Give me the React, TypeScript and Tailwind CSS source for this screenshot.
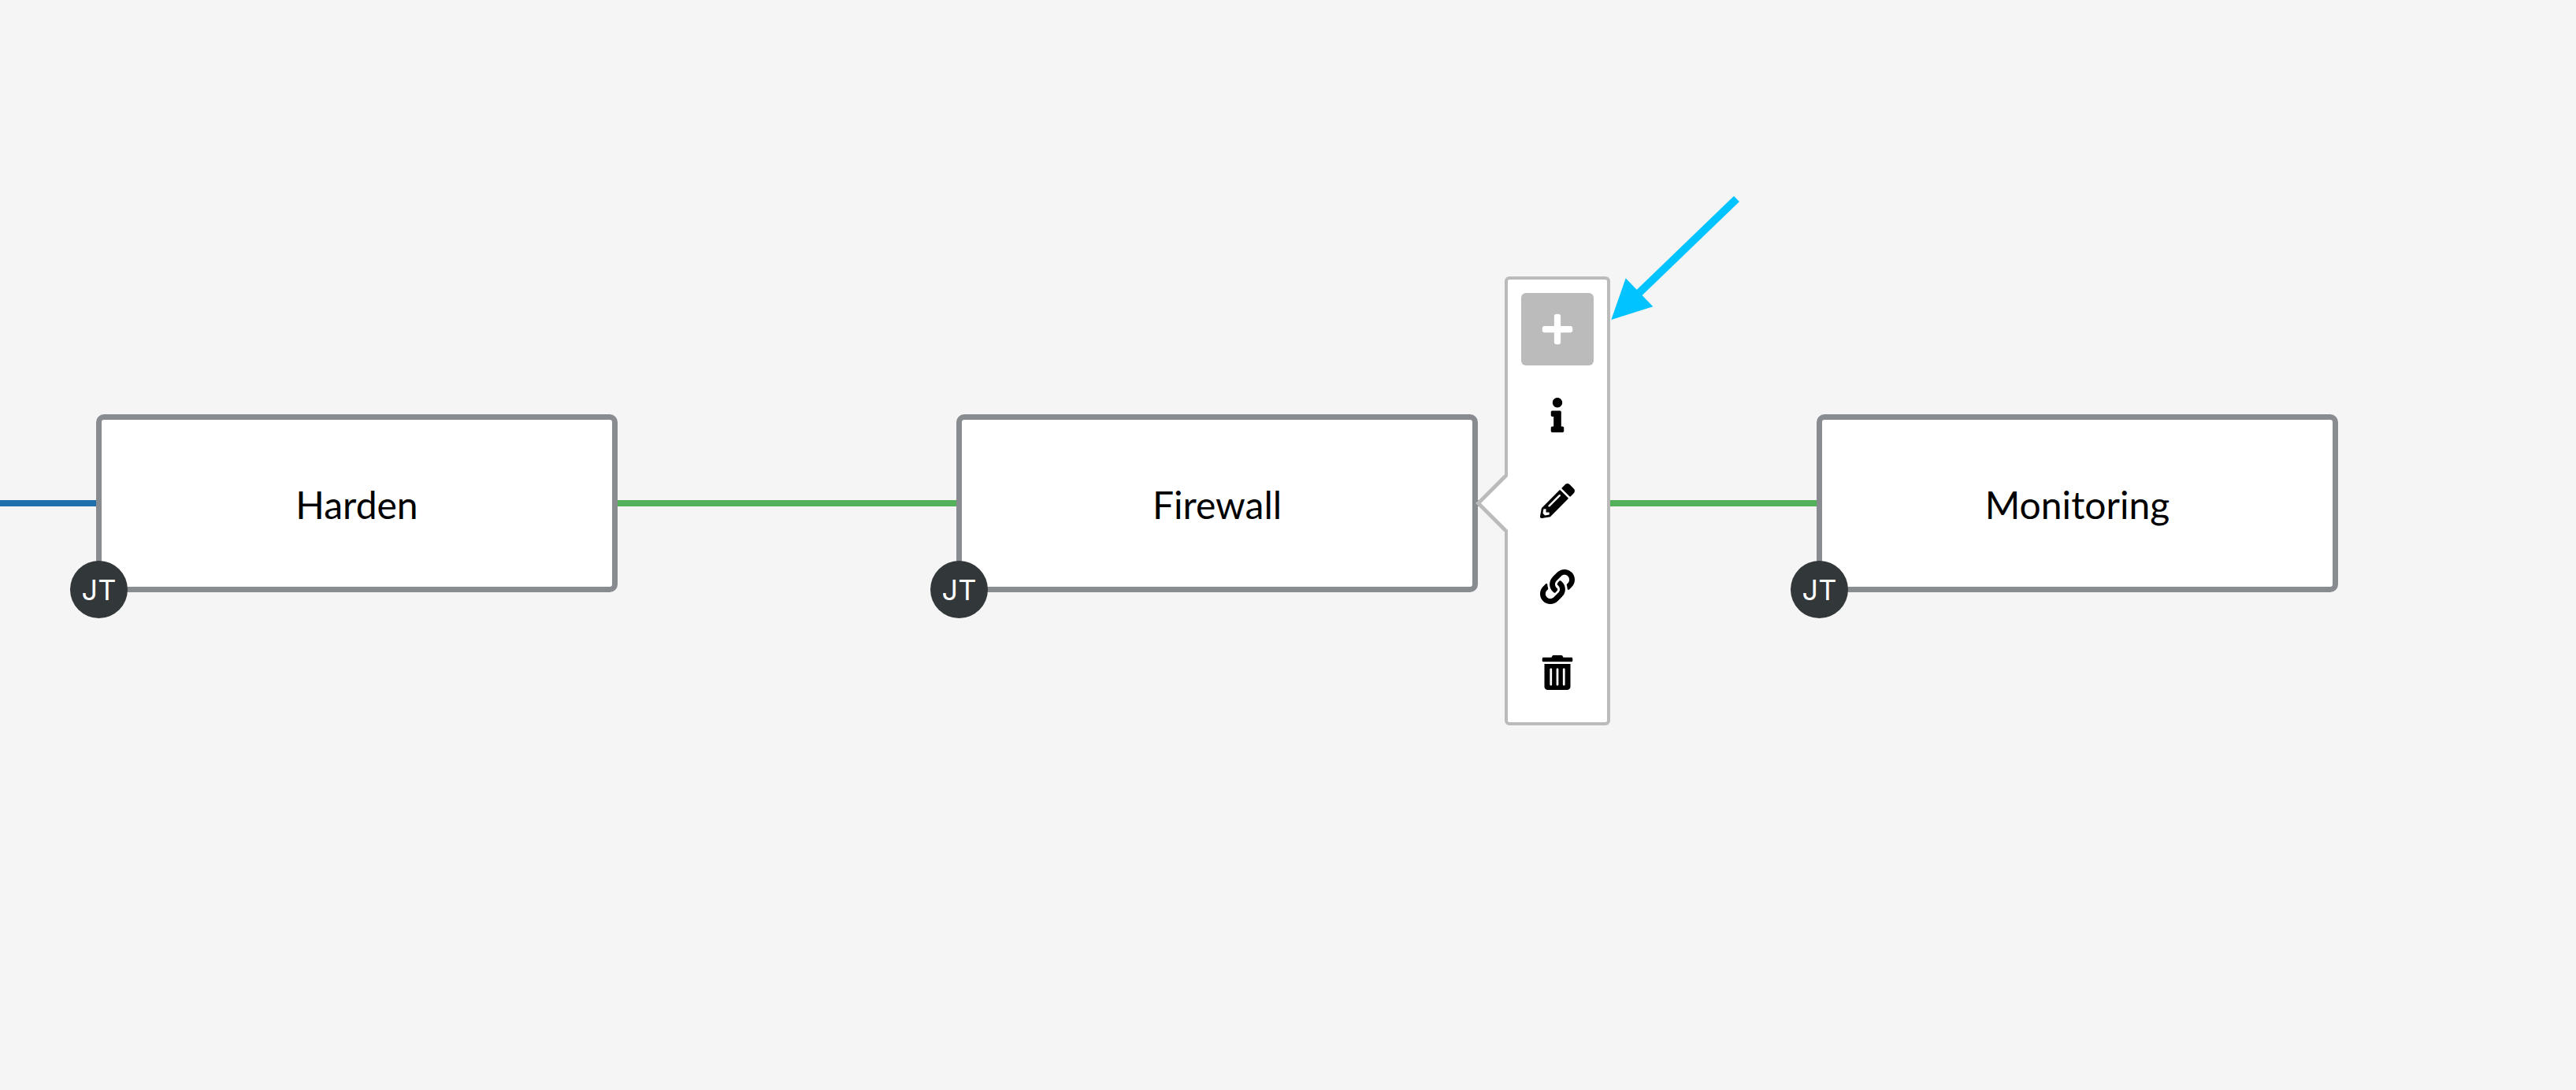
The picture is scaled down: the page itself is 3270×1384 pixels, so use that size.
import type { IconType } from "react-icons";
import { FaInfo, FaLink, FaPencilAlt, FaPlus, FaTrashAlt } from "react-icons/fa";

type Action = { label: string; icon: IconType; active?: boolean };

const actions: Action[] = [
  { label: "Add a new node", icon: FaPlus, active: true },
  { label: "View node details", icon: FaInfo },
  { label: "Edit this node", icon: FaPencilAlt },
  { label: "Link to an available node", icon: FaLink },
  { label: "Delete this node", icon: FaTrashAlt },
];

function ActionMenu() {
  return (
    <div className="absolute -top-[175px] left-[696px] z-10">
      <div
        role="toolbar"
        aria-label="Node actions"
        aria-orientation="vertical"
        className="flex flex-col gap-[17px] rounded-md border-4 border-[#bbbbbb] bg-white p-[17px]"
      >
        {actions.map(({ label, icon: Icon, active }) => (
          <button
            key={label}
            type="button"
            aria-label={label}
            className={
              active
                ? "flex size-[92px] items-center justify-center rounded-md bg-[#bbbbbb] text-white"
                : "flex size-[92px] items-center justify-center rounded-md text-black"
            }
          >
            <Icon size={44} />
          </button>
        ))}
      </div>

      {/* Pointer from the menu to its node */}
      <svg
        className="absolute top-[252px] -left-[37px]"
        width="41"
        height="72"
        viewBox="0 0 41 72"
        aria-hidden="true"
      >
        <path d="M42 -2.5 L3.5 36 L42 74.5" fill="#ffffff" stroke="#bbbbbb" strokeWidth="4.8" />
      </svg>

      {/* Callout arrow */}
      <svg
        className="absolute -top-[111px] left-[134px]"
        width="170"
        height="170"
        viewBox="0 0 170 170"
        aria-hidden="true"
      >
        <path d="M160.5 12.5 L35 133.5" stroke="#00c3ff" strokeWidth="10" />
        <path d="M1.3 166 L19.7 113.3 L54.3 149.3 Z" fill="#00c3ff" />
      </svg>
    </div>
  );
}

function Node({ name, selected }: { name: string; selected?: boolean }) {
  return (
    <div className="relative h-[226px] w-[662px] shrink-0">
      <button
        type="button"
        className="size-full rounded-[10px] border-7 border-[#888c90] bg-white pt-1 text-[48px] leading-[56px] text-black"
      >
        {name}
      </button>
      <span className="absolute -bottom-[33px] -left-[33px] flex size-[73px] items-center justify-center rounded-full bg-[#32373a] font-['Inter',sans-serif] text-[36px] leading-none text-white">
        JT
      </span>
      {selected && <ActionMenu />}
    </div>
  );
}

export default function App() {
  return (
    <main className="min-h-screen overflow-hidden bg-[#f5f5f5] pt-[526px] font-['Lato',sans-serif]">
      <div className="flex items-center">
        <div className="h-2 grow-[122] basis-0 bg-[#1f70ac]" />
        <Node name="Harden" />
        <div className="h-2 grow-[430] basis-0 bg-[#53b05b]" />
        <Node name="Firewall" selected />
        <div className="h-2 grow-[430] basis-0 bg-[#53b05b]" />
        <Node name="Monitoring" />
        <div className="grow-[302] basis-0" />
      </div>
    </main>
  );
}
